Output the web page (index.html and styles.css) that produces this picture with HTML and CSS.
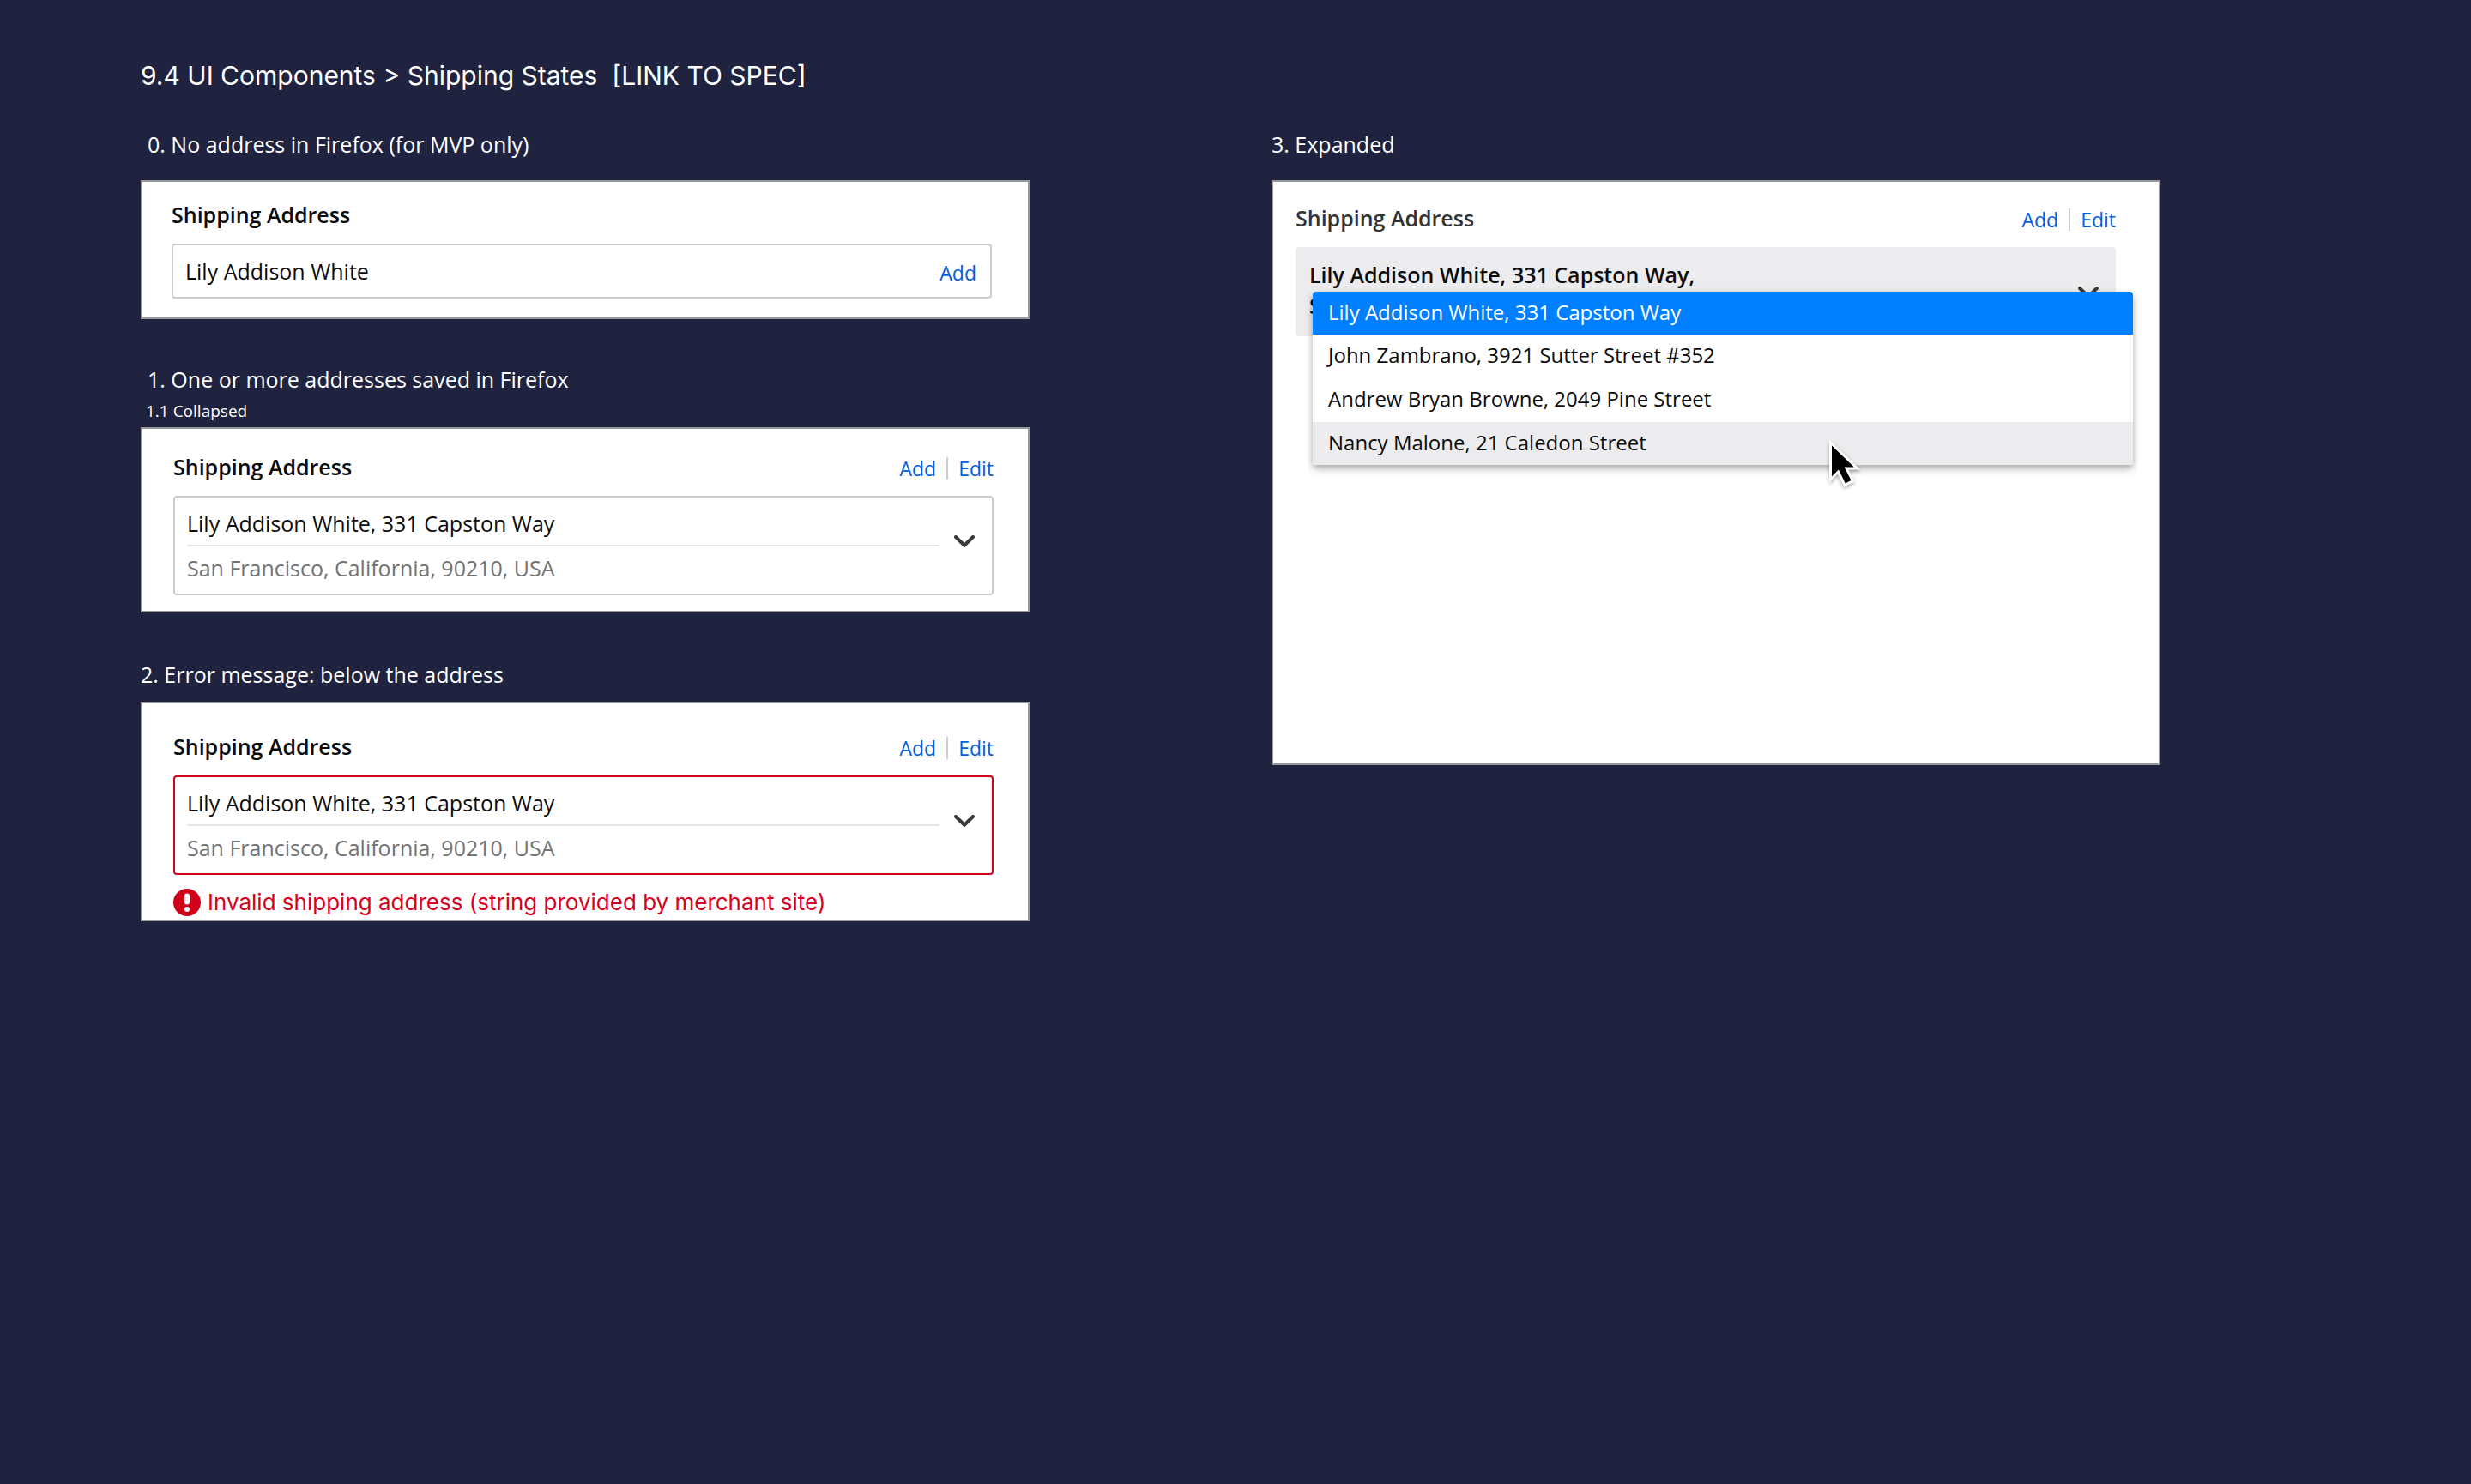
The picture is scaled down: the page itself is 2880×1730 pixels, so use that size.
FILE: index.html
```html
<!DOCTYPE html>
<html lang="en">
<head>
<meta charset="utf-8">
<meta name="viewport" content="width=device-width, initial-scale=1">
<title>9.4 UI Components &gt; Shipping States</title>
<link rel="stylesheet" href="styles.css">
</head>
<body>
<svg class="defs" aria-hidden="true">
  <symbol id="chevron" viewBox="0 0 24 14"><path d="M2 2l10 9.800L22 2" fill="none" stroke="#3a3a3b" stroke-width="4" stroke-linecap="round" stroke-linejoin="miter"/></symbol>
</svg>
<main class="page">
  <h1 class="page-title">9.4 UI Components &gt; Shipping States&nbsp; [LINK TO SPEC]</h1>
  <div class="columns">
    <div class="column">
      <section class="state">
        <h2 class="state-title state-title-inset">0. No address in Firefox (for MVP only)</h2>
        <div class="card card-empty">
          <label class="card-title" for="name">Shipping Address</label>
          <div class="field field-single">
            <input class="field-input" id="name" type="text" value="Lily Addison White">
            <div class="actions"><a class="action" href="#add">Add</a></div>
          </div>
        </div>
      </section>

      <section class="state state-collapsed">
        <h2 class="state-title state-title-inset">1. One or more addresses saved in Firefox</h2>
        <h3 class="state-subtitle">1.1 Collapsed</h3>
        <div class="card card-saved">
          <div class="card-header">
            <label class="card-title" for="saved">Shipping Address</label>
            <nav class="actions"><a class="action" href="#add">Add</a><a class="action action-next" href="#edit">Edit</a></nav>
          </div>
          <div class="field">
            <div class="field-lines">
              <select class="field-select" id="saved">
                <option>Lily Addison White, 331 Capston Way</option>
                <option>John Zambrano, 3921 Sutter Street #352</option>
              </select>
              <p class="field-detail">San Francisco, California, 90210, USA</p>
            </div>
            <svg class="chevron" aria-hidden="true"><use href="#chevron"/></svg>
          </div>
        </div>
      </section>

      <section class="state state-error">
        <h2 class="state-title">2. Error message: below the address</h2>
        <div class="card card-error">
          <div class="card-header">
            <label class="card-title" for="invalid">Shipping Address</label>
            <nav class="actions"><a class="action" href="#add">Add</a><a class="action action-next" href="#edit">Edit</a></nav>
          </div>
          <div class="field field-invalid">
            <div class="field-lines">
              <select class="field-select" id="invalid" aria-describedby="error">
                <option>Lily Addison White, 331 Capston Way</option>
                <option>John Zambrano, 3921 Sutter Street #352</option>
              </select>
              <p class="field-detail">San Francisco, California, 90210, USA</p>
            </div>
            <svg class="chevron" aria-hidden="true"><use href="#chevron"/></svg>
          </div>
          <p class="error" id="error">
            <svg class="error-icon" viewBox="0 0 32 32" aria-hidden="true"><circle cx="16" cy="16" r="16" fill="#d0021b"/><path d="M16 8.500v7" stroke="#fff" stroke-width="6" stroke-linecap="round"/><circle cx="16" cy="24" r="3" fill="#fff"/></svg>
            Invalid shipping address (string provided by merchant site)
          </p>
        </div>
      </section>
    </div>

    <div class="column">
      <section class="state">
        <h2 class="state-title">3. Expanded</h2>
        <div class="card card-expanded">
          <div class="card-header">
            <h3 class="card-title card-title-soft" id="expanded-title">Shipping Address</h3>
            <nav class="actions"><a class="action" href="#add">Add</a><a class="action action-next" href="#edit">Edit</a></nav>
          </div>
          <div class="picker">
            <button class="picker-button" type="button" aria-haspopup="listbox" aria-expanded="true">
              <span class="picker-value">Lily Addison White, 331 Capston Way,<br>San Francisco, California</span>
              <svg class="chevron" aria-hidden="true"><use href="#chevron"/></svg>
            </button>
            <div class="menu">
              <ul class="menu-list" role="listbox" aria-labelledby="expanded-title">
                <li class="option option-selected" role="option" aria-selected="true">Lily Addison White, 331 Capston Way</li>
                <li class="option option-middle" role="option">John Zambrano, 3921 Sutter Street #352</li>
                <li class="option option-middle" role="option">Andrew Bryan Browne, 2049 Pine Street</li>
                <li class="option option-hover" role="option">Nancy Malone, 21 Caledon Street</li>
              </ul>
              <svg class="cursor" viewBox="0 0 36 54" aria-hidden="true"><path d="M1.500 2v43l9-9 7.500 15.500 9.500-5L20 32h12.500z" fill="#000" stroke="#fff" stroke-width="3"/></svg>
            </div>
          </div>
        </div>
      </section>
    </div>
  </div>
</main>
</body>
</html>
```

FILE: styles.css
```css
* {
  box-sizing: border-box;
}

body {
  margin: 0;
  min-height: 100vh;
  background: #202340;
  color: #0c0c0d;
  font: 25px/36px "Open Sans", "Noto Sans", sans-serif;
}

h1, h2, h3, p, ul {
  margin: 0;
  padding: 0;
  font-weight: 400;
}

.defs {
  position: absolute;
  width: 0;
  height: 0;
}

.page {
  padding: 68px 362px 68px 164px;
}

.page-title {
  color: #fff;
  font: 30px/40px Inter, sans-serif;
}

.columns {
  display: grid;
  grid-template-columns: 1fr 1fr;
  gap: 282px;
  margin-top: 42px;
}

/* One labelled state of the component */
.state-collapsed {
  margin-top: 52px;
}

.state-error {
  margin-top: 54px;
}

.state-title {
  margin-bottom: 24px;
  color: #fff;
  font-size: 25px;
}

.state-title-inset {
  padding-left: 8px;
}

.state-collapsed .state-title {
  margin-bottom: 5px;
}

.state-error .state-title {
  margin-bottom: 14px;
}

.state-subtitle {
  margin-bottom: 5px;
  padding-left: 6px;
  color: #fff;
  font-size: 19px;
  line-height: 28px;
}

.card {
  display: flex;
  flex-direction: column;
  gap: 16px;
  border: 2px solid #999;
  background: #fff;
}

.card-empty {
  padding: 20px 42px 22px 34px;
}

.card-saved {
  padding: 26px 40px 18px 36px;
}

.card-error {
  padding: 32px 40px 4px 36px;
}

.card-expanded {
  min-height: 682px;
  padding: 24px 50px 24px 26px;
}

.card-header {
  display: flex;
  justify-content: space-between;
  align-items: center;
}

.card-title {
  font-size: 25px;
  font-weight: 600;
}

.card-title-soft {
  color: #333;
}

.actions {
  display: flex;
  align-items: center;
  padding-top: 4px;
}

.action {
  color: #0060df;
  font-size: 23px;
  line-height: 32px;
  text-decoration: none;
}

.action-next {
  margin-left: 12px;
  padding-left: 12px;
  border-left: 2px solid #ccc;
  line-height: 26px;
}

.field {
  display: flex;
  align-items: flex-start;
  gap: 17px;
  padding: 12px 20px 12px 14px;
  border: 2px solid #ccc;
  border-radius: 4px;
}

.field-single {
  padding-right: 16px;
}

.field-invalid {
  border-color: #d0021b;
}

.field-input,
.field-select {
  flex: 1;
  width: 100%;
  height: 36px;
  padding: 0;
  border: 0;
  background: none;
  color: inherit;
  font: inherit;
  appearance: none;
}

.field-lines {
  flex: 1;
  display: flex;
  flex-direction: column;
  gap: 7px;
}

.field-select {
  flex: none;
}

.field-detail {
  padding-top: 7px;
  border-top: 2px solid #e5e5e5;
  color: #737373;
}

.chevron {
  flex: none;
  width: 24px;
  height: 14px;
  margin-top: 32px;
}

.error {
  display: flex;
  align-items: center;
  gap: 8px;
  color: #d70022;
  font: 26px/32px Inter, sans-serif;
}

.error-icon {
  flex: none;
  width: 32px;
  height: 32px;
}

.picker {
  position: relative;
}

.picker-button {
  display: flex;
  align-items: flex-start;
  justify-content: space-between;
  width: 100%;
  padding: 14px 20px 18px 16px;
  border: 0;
  border-radius: 4px;
  background: #ececee;
  color: inherit;
  font: inherit;
  font-weight: 600;
  text-align: left;
}

/* The open menu lies over its button */
.menu {
  position: absolute;
  top: 52px;
  left: 20px;
  right: -20px;
}

.menu-list {
  overflow: hidden;
  border-radius: 4px;
  background: #fff;
  box-shadow: 0 4px 8px rgba(0, 0, 0, 0.35);
  list-style: none;
}

.option {
  padding: 0 18px 2px;
  font-size: 24px;
  line-height: 48px;
}

.option-middle {
  padding-bottom: 3px;
}

.option-selected {
  background: #0080ff;
  color: #fff;
}

.option-hover {
  background: #ececee;
}

.cursor {
  position: absolute;
  top: 174px;
  left: 63%;
  width: 36px;
  height: 54px;
  filter: drop-shadow(0 2px 2px rgba(0, 0, 0, 0.35));
}
```
